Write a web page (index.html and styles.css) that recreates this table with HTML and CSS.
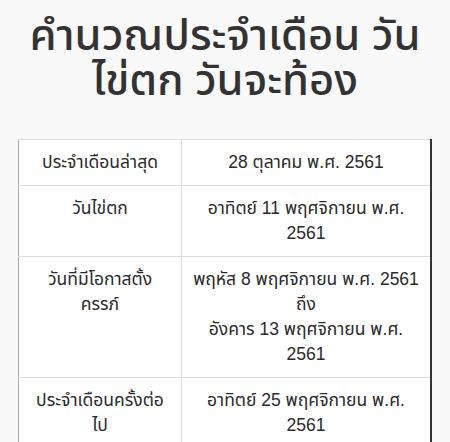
FILE: index.html
```html
<!DOCTYPE html>
<html lang="th">
<head>
<meta charset="utf-8">
<link rel="stylesheet" href="styles.css">
</head>
<body>
<main class="page">
  <h1 class="title">คำนวณประจำเดือน วัน<br>ไข่ตก วันจะท้อง</h1>
  <table class="calc">
    <tr>
      <td class="label">ประจำเดือนล่าสุด</td>
      <td class="value">28 ตุลาคม พ.ศ. 2561</td>
    </tr>
    <tr>
      <td class="label">วันไข่ตก</td>
      <td class="value">อาทิตย์ 11 พฤศจิกายน พ.ศ. 2561</td>
    </tr>
    <tr>
      <td class="label">วันที่มีโอกาสตั้งครรภ์</td>
      <td class="value">พฤหัส 8 พฤศจิกายน พ.ศ. 2561<br>ถึง<br>อังคาร 13 พฤศจิกายน พ.ศ. 2561</td>
    </tr>
    <tr>
      <td class="label">ประจำเดือนครั้งต่อไป</td>
      <td class="value">อาทิตย์ 25 พฤศจิกายน พ.ศ. 2561</td>
    </tr>
  </table>
</main>
</body>
</html>
```

FILE: styles.css
```css
html, body {
  margin: 0;
  padding: 0;
  background: #f9f9f9;
}
.page {
  padding: 0 18px;
  color: #2b2b2b;
}
.title {
  margin: 0;
  padding-top: 15px;
  text-align: center;
  font-family: "Noto Sans Thai", "Noto Sans", sans-serif;
  font-size: 43.5px;
  font-weight: 500;
  line-height: 45px;
  color: #333;
}
.calc {
  margin-top: 34px;
  width: 414px;
  border-collapse: collapse;
  background: #fff;
  font-family: "Liberation Sans", "Noto Sans Thai", sans-serif;
  font-size: 17.5px;
  line-height: 25px;
  color: #2a2a2a;
  border-left: 1px solid #aaa;
  border-right: 2px solid #333;
}
.calc td {
  border-top: 1px solid #ddd;
  border-bottom: 1px solid #ddd;
  padding: 10px 8px;
  text-align: center;
  vertical-align: top;
}
.calc .label {
  width: 138px;
  padding-left: 12px;
  padding-right: 12px;
  border-right: 1px solid #ddd;
}
```
